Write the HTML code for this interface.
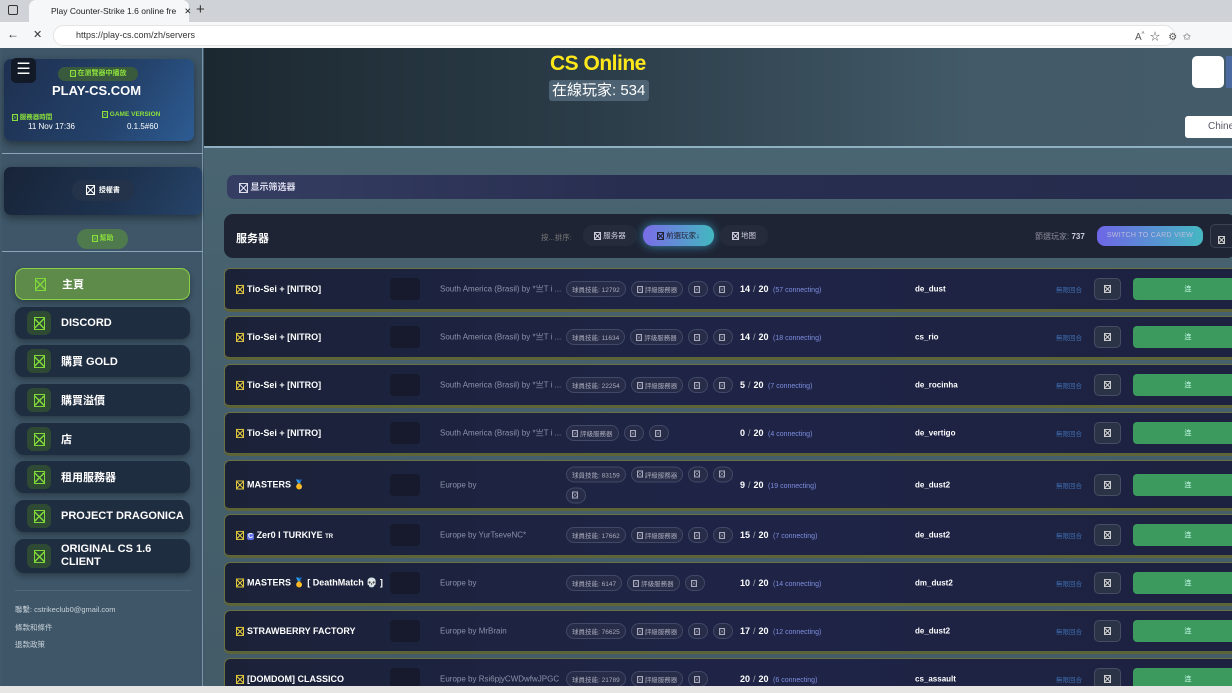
<!DOCTYPE html>
<html><head><meta charset="utf-8"><style>
*{box-sizing:border-box;margin:0;padding:0}
html,body{width:1232px;height:693px;overflow:hidden}
body{position:relative;background:#41596a;font-family:"Liberation Sans","Noto Sans CJK TC",sans-serif;color:#fff}
.a{position:absolute}
.ic{display:inline-block;width:9px;height:10px;border:1px solid currentColor;position:relative;vertical-align:middle;background:linear-gradient(45deg,transparent 45%,currentColor 45%,currentColor 55%,transparent 55%),linear-gradient(-45deg,transparent 45%,currentColor 45%,currentColor 55%,transparent 55%)}
.nav{position:absolute;left:15px;width:175px;height:32px;background:#1f2d40;border-radius:9px;font-size:11px;font-weight:bold;display:flex;align-items:center;box-shadow:0 3px 6px rgba(0,0,0,.3)}
.nav .b{width:24px;height:24px;margin-left:12px;margin-right:10px;background:#2f4a34;border-radius:6px;display:flex;align-items:center;justify-content:center;color:#7fd93a}
.nav .b .ic{width:11px;height:13px}
.row{position:absolute;left:224px;width:1020px;height:44px;background:linear-gradient(90deg,#1b2238,#1f2447 50%,#1d2240);border:1px solid #6a7040;border-bottom:3px solid #5d6438;border-radius:6px;font-size:9px;color:#fff}
.row>*{position:absolute;top:50%;transform:translateY(-50%)}
.nm{left:11px;font-weight:bold;font-size:9px;white-space:nowrap}
.nm .ic{color:#e0c63c;margin-right:3px;width:8px;height:9px}
.sq{left:165px;width:30px;height:22px;background:#161a2c;border-radius:4px}
.loc{left:215px;color:#8a93ab;font-size:8px;white-space:nowrap}
.tags{left:341px;display:flex;gap:5px;flex-wrap:wrap;width:170px}
.t{border:1px solid #414966;background:#272d48;border-radius:9px;height:16px;padding:0 5px;font-size:6.5px;color:#aab;display:flex;align-items:center;white-space:nowrap}
.t .ic{width:6px;height:7px;margin-right:2px}
.pl{left:515px;font-weight:bold;font-size:9px;white-space:nowrap}
.pl i{font-style:normal;color:#9aa;font-weight:normal;margin:0 3px}
.pl span{color:#7e8fe0;font-size:7px;font-weight:normal;margin-left:2px}
.mp{left:690px;font-weight:bold;font-size:8px}
.un{left:831px;color:#3f6fb0;font-size:6.5px}
.bt{left:869px;width:27px;height:22px;background:#2b3347;border:1px solid #444d62;border-radius:5px;display:flex;align-items:center;justify-content:center;color:#ccc}
.bt .ic{width:7px;height:8px}
.cn{left:908px;width:110px;height:22px;background:#3c9a5e;border-radius:4px;font-size:7px;color:#cfe;display:flex;align-items:center;justify-content:center}
</style></head><body>
<div class="a" style="left:0;top:0;width:1232px;height:22px;background:#cfd2d6"></div>
<div class="a" style="left:29px;top:0;width:160px;height:22px;background:#f6f7f8;border-radius:7px 7px 0 0;font-size:8.5px;color:#222;padding:6px 0 0 22px;white-space:nowrap">Play Counter-Strike 1.6 online fre<span style="margin-left:8px">✕</span></div>
<div class="a" style="left:8px;top:5px;width:10px;height:10px;border:1.5px solid #333;border-radius:2px"></div>
<div class="a" style="left:196px;top:1px;font-size:15px;color:#333">+</div>
<div class="a" style="left:0;top:22px;width:1232px;height:26px;background:#f6f7f8"></div>
<div class="a" style="left:7px;top:27px;font-size:12px;color:#333">←</div>
<div class="a" style="left:33px;top:28px;font-size:11px;color:#333">✕</div>
<div class="a" style="left:53px;top:25px;width:1122px;height:21px;border-radius:11px;background:#fff;border:1px solid #e4e4e4"></div>
<div class="a" style="left:76px;top:30px;font-size:9px;color:#333">https://play-cs.com/zh/servers</div>
<div class="a" style="left:1135px;top:28px;font-size:10px;color:#555">A<sup style="font-size:6px">ᴬ</sup> &nbsp;☆ &nbsp;&nbsp;⚙ &nbsp;✩</div>
<div class="a" style="left:2px;top:48px;width:201px;height:638px;background:#3e5668;border-right:1px solid #7a95a8"></div>
<div class="a" style="left:4px;top:59px;width:190px;height:82px;border-radius:7px;background:linear-gradient(120deg,#1e3050,#24426b 60%,#2d5c93);box-shadow:0 3px 8px rgba(0,0,0,.4)"></div>
<div class="a" style="left:11px;top:58px;width:25px;height:25px;background:#121a28;border-radius:5px;font-size:16px;text-align:center;line-height:24px">☰</div>
<div class="a" style="left:58px;top:67px;width:80px;height:14px;border-radius:7px;background:#3a5a3e;color:#8be03c;font-size:7px;font-weight:bold;text-align:center;line-height:14px"><span class="ic" style="width:6px;height:7px"></span> 在瀏覽器中播放</div>
<div class="a" style="left:52px;top:83px;font-size:13px;font-weight:bold">PLAY-CS.COM</div>
<div class="a" style="left:12px;top:111px;font-size:6.5px;color:#8be03c;font-weight:bold"><span class="ic" style="width:6px;height:7px"></span> 服務器時間</div>
<div class="a" style="left:28px;top:122px;font-size:8px">11 Nov 17:36</div>
<div class="a" style="left:102px;top:111px;font-size:6.5px;color:#8be03c;font-weight:bold"><span class="ic" style="width:6px;height:7px"></span> GAME VERSION</div>
<div class="a" style="left:127px;top:122px;font-size:8px">0.1.5#60</div>
<div class="a" style="left:2px;top:153px;width:201px;height:1px;background:#8aa6b8"></div>
<div class="a" style="left:4px;top:167px;width:198px;height:48px;border-radius:7px;background:linear-gradient(120deg,#182438,#1e3350 60%,#264469);box-shadow:0 3px 8px rgba(0,0,0,.4)"></div>
<div class="a" style="left:72px;top:180px;width:62px;height:21px;border-radius:10px;background:#243349;font-size:7px;font-weight:bold;line-height:21px;text-align:center"><span class="ic"></span> &nbsp;授權書</div>
<div class="a" style="left:77px;top:229px;width:51px;height:20px;border-radius:10px;background:#4f7a4e;color:#8be03c;font-size:7px;font-weight:bold;line-height:20px;text-align:center"><span class="ic" style="width:6px;height:7px"></span> 幫助</div>
<div class="a" style="left:2px;top:251px;width:201px;height:1px;background:#8aa6b8"></div>
<div class="nav" style="top:268px;background:#5e8a4a;border:1px solid #8bd048"><div class="b" style="background:transparent"><span class="ic"></span></div>主頁</div>
<div class="nav" style="top:307px"><div class="b"><span class="ic"></span></div>DISCORD</div>
<div class="nav" style="top:345px"><div class="b"><span class="ic"></span></div>購買 GOLD</div>
<div class="nav" style="top:384px"><div class="b"><span class="ic"></span></div>購買溢價</div>
<div class="nav" style="top:423px"><div class="b"><span class="ic"></span></div>店</div>
<div class="nav" style="top:461px"><div class="b"><span class="ic"></span></div>租用服務器</div>
<div class="nav" style="top:500px"><div class="b"><span class="ic"></span></div>PROJECT DRAGONICA</div>
<div class="nav" style="top:539px;height:34px;line-height:13px"><div class="b"><span class="ic"></span></div>ORIGINAL CS 1.6<br>CLIENT</div>
<div class="a" style="left:15px;top:590px;width:176px;height:1px;background:#4f687a"></div>
<div class="a" style="left:15px;top:604px;font-size:7.5px;color:#c9d3da">聯繫: cstrikeclub0@gmail.com</div>
<div class="a" style="left:15px;top:622px;font-size:7.5px;color:#c9d3da">條款和條件</div>
<div class="a" style="left:15px;top:639px;font-size:7.5px;color:#c9d3da">退款政策</div>
<div class="a" style="left:204px;top:48px;width:1028px;height:98px;background:linear-gradient(90deg,#1c2830,#2c3e4a 40%,#435a68 75%,#445b69)"></div>
<div class="a" style="left:204px;top:146px;width:1028px;height:2px;background:#8fb0c0"></div>
<div class="a" style="left:550px;top:52px;font-size:21px;color:#ffe81a;font-weight:bold;letter-spacing:-.5px">CS Online</div>
<div class="a" style="left:549px;top:80px;width:100px;height:21px;background:#4d6272;border-radius:3px;font-size:15px;line-height:21px;padding-left:3px">在線玩家: 534</div>
<div class="a" style="left:1192px;top:56px;width:32px;height:32px;background:#fff;border-radius:5px"></div>
<div class="a" style="left:1226px;top:56px;width:6px;height:32px;background:#4a6aa0"></div>
<div class="a" style="left:1185px;top:116px;width:50px;height:22px;background:#fff;border-radius:3px;font-size:10px;color:#556;padding:5px 0 0 23px">Chine</div>
<div class="a" style="left:204px;top:148px;width:1028px;height:538px;background:linear-gradient(180deg,#4a6572,#46606d 30%,#435c68)"></div>
<div class="a" style="left:227px;top:175px;width:1010px;height:24px;background:linear-gradient(90deg,#353e62,#282e50 40%,#262c4c);border-radius:7px;font-size:9px;font-weight:bold;line-height:24px;padding-left:12px;color:#dde"><span class="ic"></span> 显示筛选器</div>
<div class="a" style="left:224px;top:214px;width:1012px;height:44px;background:#1e2433;border-radius:9px"></div>
<div class="a" style="left:236px;top:230px;font-size:11px;font-weight:bold">服务器</div>
<div class="a" style="left:541px;top:232px;font-size:7.5px;color:#777">按...排序:</div>
<div class="a" style="left:583px;top:225px;width:54px;height:21px;border-radius:10px;background:#252b3a;font-size:7.5px;line-height:21px;text-align:center;color:#ccd"><span class="ic" style="width:7px;height:8px"></span> 服务器</div>
<div class="a" style="left:643px;top:225px;width:71px;height:21px;border-radius:10px;background:linear-gradient(90deg,#7a6ce8,#42b8c0);box-shadow:0 0 10px #3a8ab0;font-size:7.5px;line-height:21px;text-align:center;color:#223"><span class="ic" style="width:7px;height:8px"></span> 前選玩家↓</div>
<div class="a" style="left:720px;top:225px;width:48px;height:21px;border-radius:10px;background:#252b3a;font-size:7.5px;line-height:21px;text-align:center;color:#ccd"><span class="ic" style="width:7px;height:8px"></span> 地图</div>
<div class="a" style="left:1035px;top:231px;font-size:8px;color:#889">節選玩家: <b style="color:#ccd">737</b></div>
<div class="a" style="left:1097px;top:226px;width:106px;height:20px;border-radius:8px;background:linear-gradient(90deg,#6e66e6,#45b8c2);font-size:7px;line-height:20px;text-align:center;color:#bbd;letter-spacing:.3px">SWITCH TO CARD VIEW</div>
<div class="a" style="left:1210px;top:224px;width:30px;height:24px;border-radius:5px;background:#232938;border:1px solid #3a4255;padding:6px 0 0 7px;color:#ccc"><span class="ic" style="width:7px;height:8px"></span></div>
<div class="row" style="top:268px"><div class="nm"><span class="ic"></span>Tio-Sei + [NITRO]</div><div class="sq"></div><div class="loc">South America (Brasil) by *亗T i ...</div><div class="tags"><div class="t">球員技能: 12792</div><div class="t"><span class="ic"></span>評級服務器</div><div class="t"><span class="ic"></span></div><div class="t"><span class="ic"></span></div></div><div class="pl">14<i>/</i>20 <span>(57 connecting)</span></div><div class="mp">de_dust</div><div class="un">無限回合</div><div class="bt"><span class="ic"></span></div><div class="cn">连</div></div>
<div class="row" style="top:316px"><div class="nm"><span class="ic"></span>Tio-Sei + [NITRO]</div><div class="sq"></div><div class="loc">South America (Brasil) by *亗T i ...</div><div class="tags"><div class="t">球員技能: 11634</div><div class="t"><span class="ic"></span>評級服務器</div><div class="t"><span class="ic"></span></div><div class="t"><span class="ic"></span></div></div><div class="pl">14<i>/</i>20 <span>(18 connecting)</span></div><div class="mp">cs_rio</div><div class="un">無限回合</div><div class="bt"><span class="ic"></span></div><div class="cn">连</div></div>
<div class="row" style="top:364px"><div class="nm"><span class="ic"></span>Tio-Sei + [NITRO]</div><div class="sq"></div><div class="loc">South America (Brasil) by *亗T i ...</div><div class="tags"><div class="t">球員技能: 22254</div><div class="t"><span class="ic"></span>評級服務器</div><div class="t"><span class="ic"></span></div><div class="t"><span class="ic"></span></div></div><div class="pl">5<i>/</i>20 <span>(7 connecting)</span></div><div class="mp">de_rocinha</div><div class="un">無限回合</div><div class="bt"><span class="ic"></span></div><div class="cn">连</div></div>
<div class="row" style="top:412px"><div class="nm"><span class="ic"></span>Tio-Sei + [NITRO]</div><div class="sq"></div><div class="loc">South America (Brasil) by *亗T i ...</div><div class="tags"><div class="t"><span class="ic"></span>評級服務器</div><div class="t"><span class="ic"></span></div><div class="t"><span class="ic"></span></div></div><div class="pl">0<i>/</i>20 <span>(4 connecting)</span></div><div class="mp">de_vertigo</div><div class="un">無限回合</div><div class="bt"><span class="ic"></span></div><div class="cn">连</div></div>
<div class="row" style="top:460px;height:51px"><div class="nm"><span class="ic"></span>MASTERS 🥇</div><div class="sq"></div><div class="loc">Europe by</div><div class="tags"><div class="t">球員技能: 83159</div><div class="t"><span class="ic"></span>評級服務器</div><div class="t"><span class="ic"></span></div><div class="t"><span class="ic"></span></div><div class="t"><span class="ic"></span></div></div><div class="pl">9<i>/</i>20 <span>(19 connecting)</span></div><div class="mp">de_dust2</div><div class="un">無限回合</div><div class="bt"><span class="ic"></span></div><div class="cn">连</div></div>
<div class="row" style="top:514px"><div class="nm"><span class="ic"></span><span style="background:#5a6ae0;border-radius:2px;padding:0 1px;font-size:7px">C</span> Zer0 I TURKIYE <small style="font-size:6px">TR</small></div><div class="sq"></div><div class="loc">Europe by YurTseveNC*</div><div class="tags"><div class="t">球員技能: 17662</div><div class="t"><span class="ic"></span>評級服務器</div><div class="t"><span class="ic"></span></div><div class="t"><span class="ic"></span></div></div><div class="pl">15<i>/</i>20 <span>(7 connecting)</span></div><div class="mp">de_dust2</div><div class="un">無限回合</div><div class="bt"><span class="ic"></span></div><div class="cn">连</div></div>
<div class="row" style="top:562px"><div class="nm"><span class="ic"></span>MASTERS 🥇 [ DeathMatch 💀 ]</div><div class="sq"></div><div class="loc">Europe by</div><div class="tags"><div class="t">球員技能: 6147</div><div class="t"><span class="ic"></span>評級服務器</div><div class="t"><span class="ic"></span></div></div><div class="pl">10<i>/</i>20 <span>(14 connecting)</span></div><div class="mp">dm_dust2</div><div class="un">無限回合</div><div class="bt"><span class="ic"></span></div><div class="cn">连</div></div>
<div class="row" style="top:610px"><div class="nm"><span class="ic"></span>STRAWBERRY FACTORY</div><div class="sq"></div><div class="loc">Europe by MrBrain</div><div class="tags"><div class="t">球員技能: 76625</div><div class="t"><span class="ic"></span>評級服務器</div><div class="t"><span class="ic"></span></div><div class="t"><span class="ic"></span></div></div><div class="pl">17<i>/</i>20 <span>(12 connecting)</span></div><div class="mp">de_dust2</div><div class="un">無限回合</div><div class="bt"><span class="ic"></span></div><div class="cn">连</div></div>
<div class="a" style="left:0;top:658px;width:1232px;height:28px;overflow:hidden">
<div class="row" style="top:0;left:224px"><div class="nm"><span class="ic"></span>[DOMDOM] CLASSICO</div><div class="sq"></div><div class="loc">Europe by Rsi6pjyCWDwfwJPGC</div><div class="tags"><div class="t">球員技能: 21789</div><div class="t"><span class="ic"></span>評級服務器</div><div class="t"><span class="ic"></span></div></div><div class="pl">20<i>/</i>20 <span>(6 connecting)</span></div><div class="mp">cs_assault</div><div class="un">無限回合</div><div class="bt"><span class="ic"></span></div><div class="cn">连</div></div>
</div>
<div class="a" style="left:0;top:686px;width:1232px;height:7px;background:#e8e6e4"></div>
</body></html>
